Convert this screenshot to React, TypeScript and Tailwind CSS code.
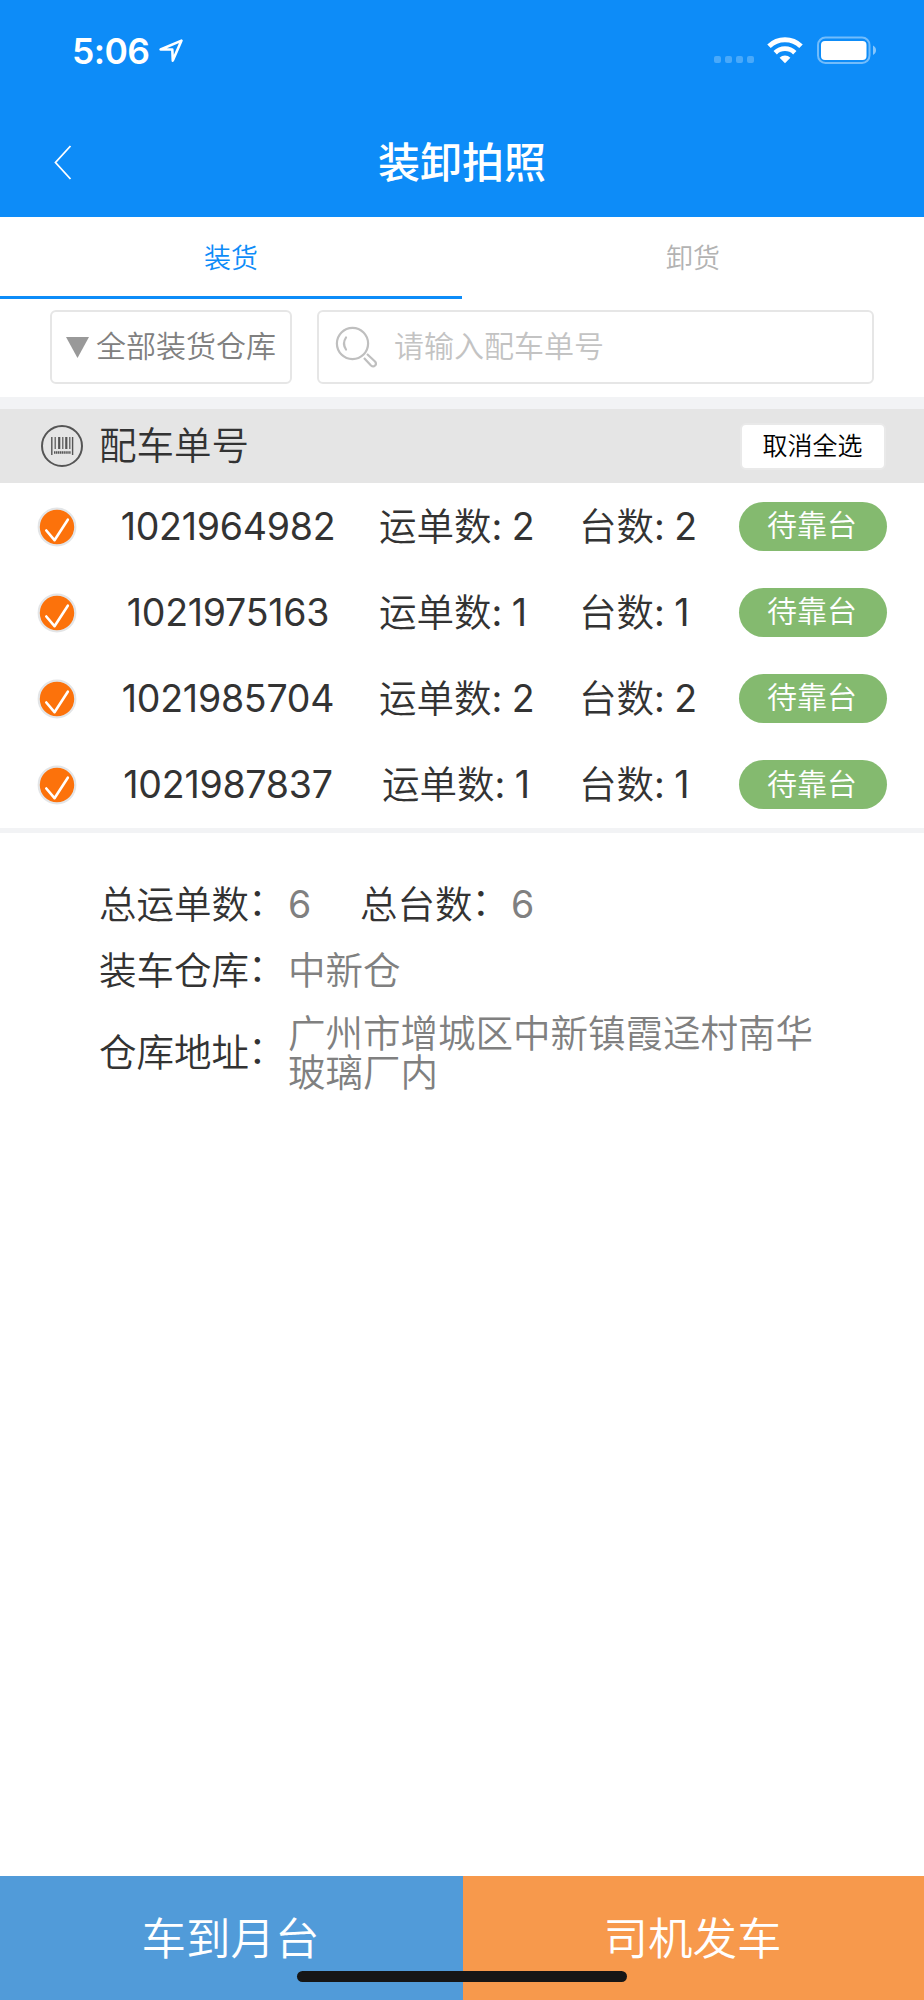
type Order = {
  id: string;
  waybills: number;
  units: number;
  shift?: boolean;
};

const orders: Order[] = [
  { id: "1021964982", waybills: 2, units: 2 },
  { id: "1021975163", waybills: 1, units: 1 },
  { id: "1021985704", waybills: 2, units: 2 },
  { id: "1021987837", waybills: 1, units: 1, shift: true },
];

function StatusBar() {
  return (
    <div className="flex h-[102px] items-start pl-[72px] pr-[47px] pt-[36px] text-white">
      <span className="mt-[-3px] w-[78px] text-[35.5px] font-semibold leading-[38px] tracking-[-0.6px]">5:06</span>
      <svg className="ml-[8px] mt-[1px]" width="28" height="28" viewBox="0 0 28 28" fill="none">
        <path d="M23.5 3.6 2.6 12.5H14.3L14.8 23.6Z" stroke="currentColor" strokeWidth="2.6" strokeLinejoin="round" />
      </svg>
      <div className="ml-auto flex items-start">
        <div className="mt-[20px] flex gap-[4px]">
          {[0, 1, 2, 3].map((i) => (
            <span key={i} className="size-[7px] rounded-[2px] bg-white/25" />
          ))}
        </div>
        <svg className="ml-[13px] mt-px" width="36" height="27" viewBox="0 0 36 27" fill="none" stroke="currentColor">
          <path d="M2 9.2a22.8 22.8 0 0 1 32 0" strokeWidth="5" />
          <path d="M8.2 15.7a14 14 0 0 1 19.6 0" strokeWidth="4.8" />
          <path d="M18 26.3 12.6 20.8a7.6 7.6 0 0 1 10.8 0Z" fill="currentColor" stroke="none" />
        </svg>
        <svg className="ml-[14px]" width="60" height="28" viewBox="0 0 60 28">
          <rect x="1" y="1.5" width="51.5" height="25.5" rx="7.5" fill="none" stroke="#fff" strokeOpacity=".42" strokeWidth="2" />
          <rect x="4" y="5" width="45.5" height="19" rx="4" fill="#fff" />
          <path d="M56 9.5c4 2 4 7.5 0 9.5Z" fill="#fff" fillOpacity=".5" />
        </svg>
      </div>
    </div>
  );
}

function CheckIcon() {
  return (
    <svg className="mt-px shrink-0" width="40" height="40" viewBox="0 0 40 40" fill="none">
      <circle cx="20" cy="20" r="18.3" fill="#fc720b" stroke="#e3e5e7" strokeWidth="2.2" />
      <path d="m9.3 23.5 8.2 9.7 13.3-20.5" stroke="#fff" strokeWidth="2.6" strokeLinecap="round" strokeLinejoin="round" />
    </svg>
  );
}

function BarcodeIcon() {
  return (
    <svg width="42" height="42" viewBox="0 0 42 42" fill="none" stroke="#555">
      <circle cx="21" cy="21" r="20" strokeWidth="2" />
      <path d="M10.8 12v18M31.6 12v18" strokeWidth="1.4" />
      <path d="M14.2 12v12M21.8 12v12M28.8 12v12" strokeWidth="1.2" />
      <path d="M18.2 12v12M25.3 12v12" strokeWidth="2.2" />
      <path d="M13 27.5h17" strokeWidth="2.4" strokeDasharray="1.4 .5" />
    </svg>
  );
}

function OrderRow({ order }: { order: Order }) {
  return (
    <div className="flex h-[86.2px] items-center pl-[37px]">
      <CheckIcon />
      <span className="ml-[31px] mt-px w-[240px] text-center font-normal tracking-[-0.25px]">{order.id}</span>
      <div className={order.shift ? "ml-[34px] mt-px w-[197px]" : "ml-[31px] mt-px w-[200px]"}>
        运单数<span className="font-normal tracking-[-0.5px]">: {order.waybills}</span>
      </div>
      <div className="mt-px w-[160px]">
        台数<span className="font-normal tracking-[-0.5px]">: {order.units}</span>
      </div>
      <span className="flex h-[49px] w-[148px] items-center justify-center rounded-full bg-[#84ba6f] pb-[2px] pr-[2px] text-[30px] leading-none text-white">
        待靠台
      </span>
    </div>
  );
}

function Label({ text }: { text: string }) {
  return (
    <span>
      {text}
      <span className="relative left-[-1px] top-[-3px]">：</span>
    </span>
  );
}

export default function App() {
  return (
    <div className="flex h-[2000px] w-[924px] flex-col overflow-hidden bg-white font-['Inter','Noto_Sans_CJK_SC',sans-serif] text-[37.5px] font-[350] leading-none text-[#333]">
      <header className="h-[217px] shrink-0 bg-[#0d8cf8]">
        <StatusBar />
        <div className="flex h-[115px] items-center pl-[53px] pr-[73px] text-white">
          <svg width="20" height="36" viewBox="0 0 20 36" fill="none" className="mt-[5px]">
            <path d="M17.5 2 2.5 18.5 17.5 35" stroke="currentColor" strokeWidth="1.8" />
          </svg>
          <h1 className="mt-[7px] flex-1 text-center text-[42px] font-medium">装卸拍照</h1>
        </div>
      </header>

      <nav className="flex h-[82px] shrink-0 text-[27px]">
        <div className="flex w-1/2 items-center justify-center border-b-[3px] border-[#0d8cf8] pt-[4px] text-[#0d8cf8]">装货</div>
        <div className="flex w-1/2 items-center justify-center border-b-[3px] border-transparent pt-[4px] text-[#b3b3b3]">卸货</div>
      </nav>

      <div className="flex h-[98px] shrink-0 gap-[25px] pl-[50px] pt-[11px] text-[30px]">
        <div className="flex h-[74px] w-[242px] items-center rounded-md border-2 border-[#e6e6e6] pl-[14px] text-[#808080]">
          <svg width="23" height="21" viewBox="0 0 23 21">
            <path d="M0 0H23L11.5 21Z" fill="#999" />
          </svg>
          <span className="mb-[2px] ml-[7px] whitespace-nowrap">全部装货仓库</span>
        </div>
        <div className="flex h-[74px] w-[557px] items-center rounded-md border-2 border-[#e6e6e6] pl-[16px] text-[#c3c3c3]">
          <svg width="42" height="42" viewBox="0 0 42 42" fill="none" stroke="#bfbfbf" strokeWidth="2.2">
            <circle cx="17.5" cy="17.5" r="15.6" />
            <path d="M11 11.5q-4 6 0 12" strokeLinecap="round" />
            <path d="m29 32 7 7.5c3 2.5 6.5-1 4-4l-8-7.5" strokeLinejoin="round" />
          </svg>
          <span className="mb-[3px] ml-[17px]">请输入配车单号</span>
        </div>
      </div>

      <div className="h-[12px] shrink-0 bg-[#f2f3f5]" />

      <div className="flex h-[74px] shrink-0 items-center bg-[#e5e5e5] pl-[41px] pr-[38px]">
        <BarcodeIcon />
        <span className="ml-[16px]">配车单号</span>
        <button className="ml-auto flex h-[47px] w-[146px] items-center justify-center rounded-md border-2 border-[#e9e9e9] bg-white pr-[1px] text-[25px] text-black">
          取消全选
        </button>
      </div>

      <div className="shrink-0">
        {orders.map((order) => (
          <OrderRow key={order.id} order={order} />
        ))}
      </div>

      <div className="h-[5px] shrink-0 bg-[#f2f3f5]" />

      <div className="flex flex-col pl-[99px] pt-[39px]">
        <div className="flex h-[66px] items-center">
          <div className="w-[189px]">
            <Label text="总运单数" />
          </div>
          <span className="w-[72px] font-normal text-[#808080]">6</span>
          <div className="w-[151px]">
            <Label text="总台数" />
          </div>
          <span className="font-normal text-[#808080]">6</span>
        </div>
        <div className="flex h-[66px] items-center">
          <div className="w-[189px]">
            <Label text="装车仓库" />
          </div>
          <span className="text-[#808080]">中新仓</span>
        </div>
        <div className="flex h-[98px] items-center">
          <div className="w-[189px]">
            <Label text="仓库地址" />
          </div>
          <span className="w-[526px] leading-[39px] text-[#808080]">广州市增城区中新镇霞迳村南华玻璃厂内</span>
        </div>
      </div>

      <footer className="relative mt-auto flex h-[124px] shrink-0 text-[44.5px] text-white">
        <div className="flex w-[463px] items-center justify-center bg-[#519bd9] pr-[2px] pt-[3px]">车到月台</div>
        <div className="flex w-[461px] items-center justify-center bg-[#f7994c] pr-[2px] pt-[3px]">司机发车</div>
        <div className="absolute bottom-[18px] left-[297px] h-[11px] w-[330px] rounded-full bg-[#161616]" />
      </footer>
    </div>
  );
}
